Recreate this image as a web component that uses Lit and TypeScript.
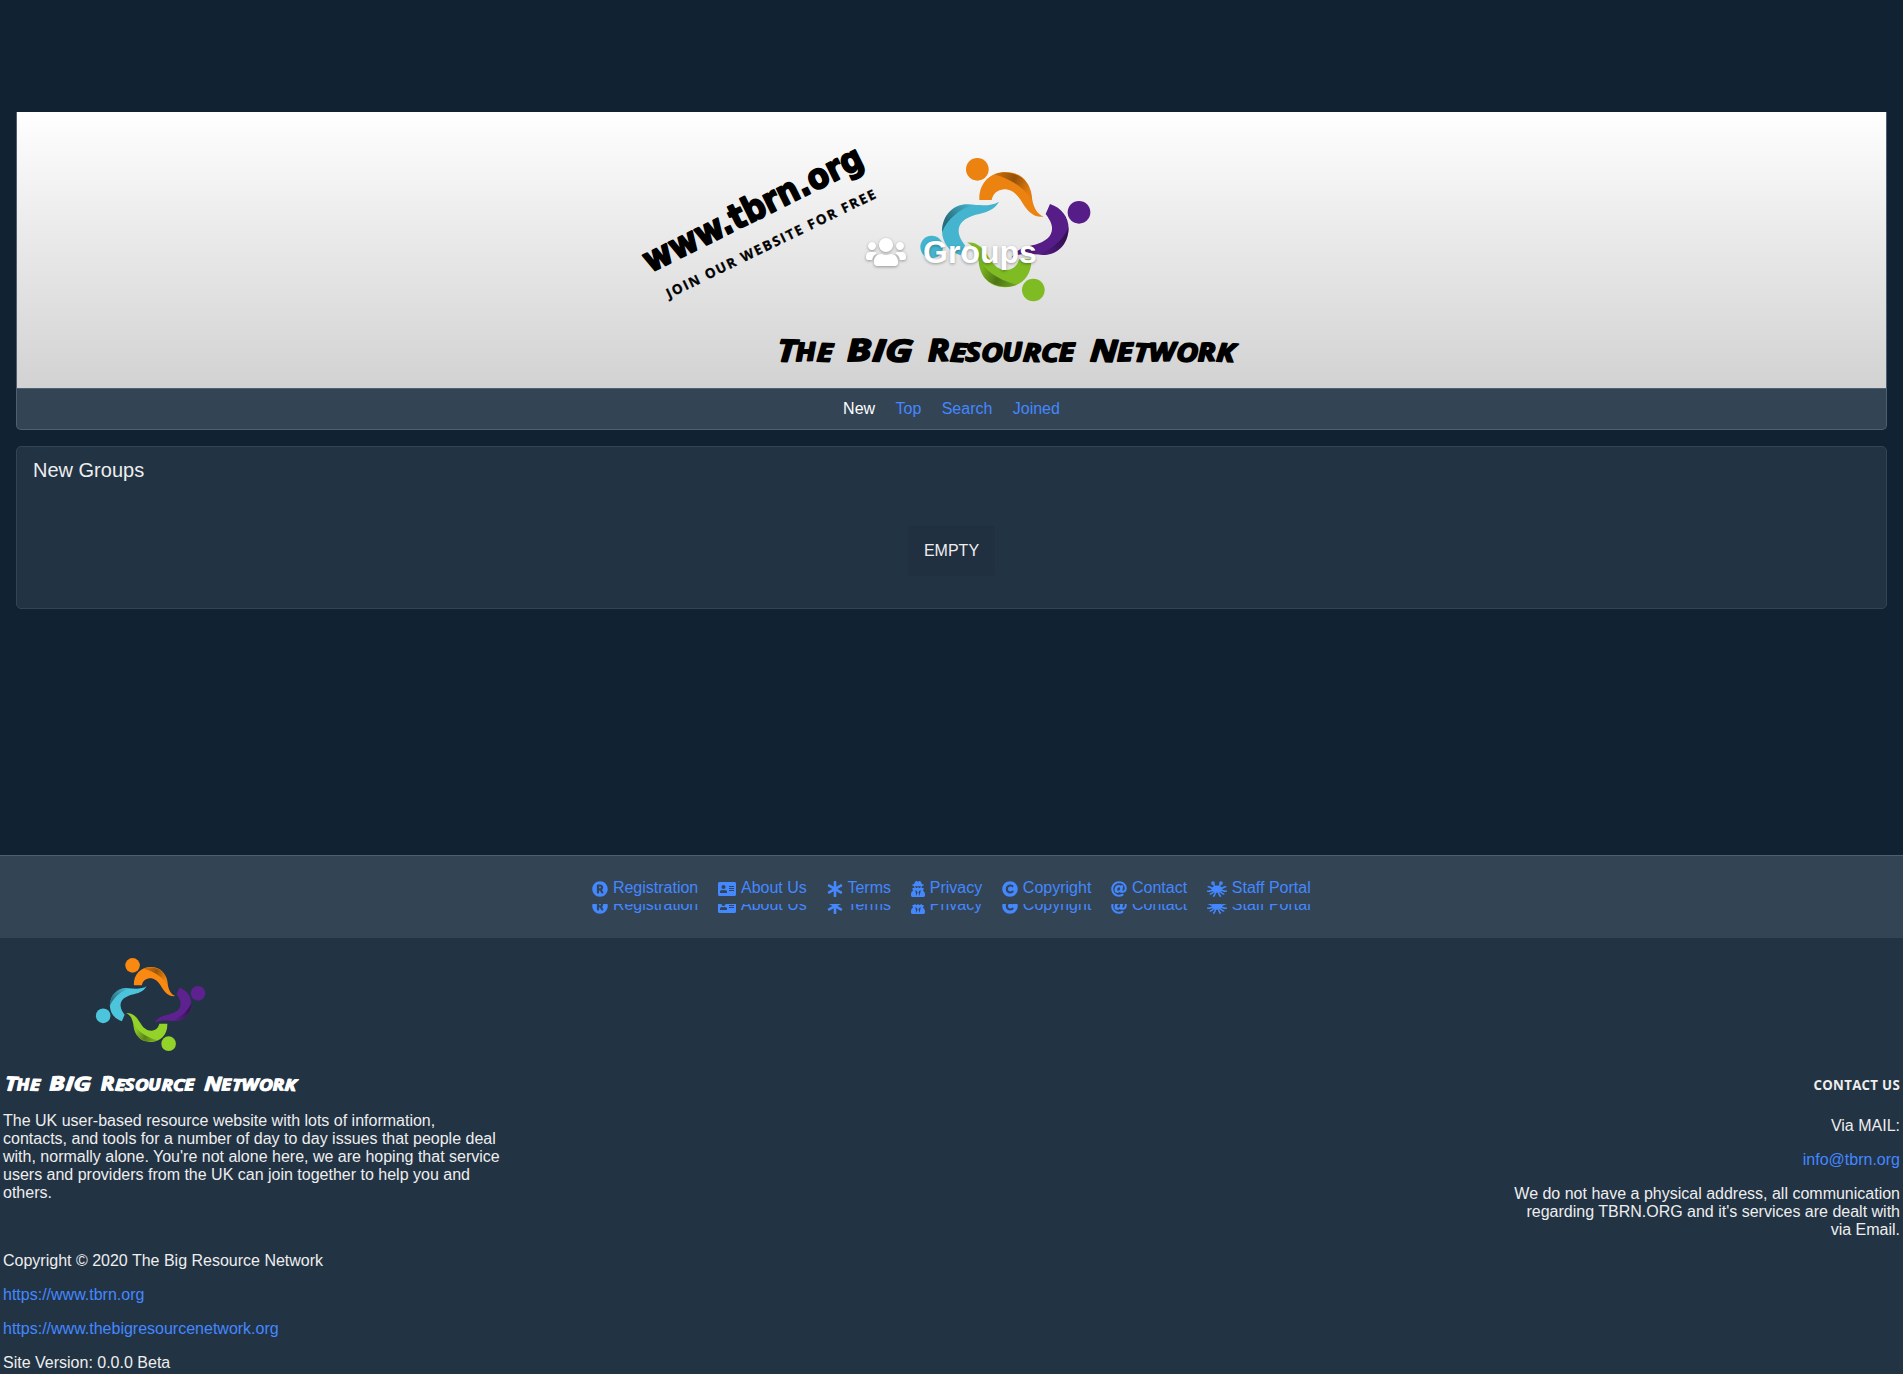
import { LitElement, html, css, svg } from "lit";
import { customElement } from "lit/decorators.js";

const ORANGE_ARM =
  "M418 180C416 130 450 96 497 96C545 96 570 130 575 165C578 200 590 222 611 230C580 234 562 212 547 188C530 160 515 148 492 148C472 150 460 160 455 180Z";
const ORANGE_FOLD = "M460 103C520 85 571 115 575 168L577 184C560 150 520 118 460 103Z";
const PURPLE_ARM =
  "M630 192C665 203 686 232 686 266C684 315 650 346 608 345C570 342 540 338 515 353C528 328 555 320 585 314C615 305 638 290 636 262C634 245 626 235 617 222Z";
const PURPLE_FOLD = "M686 262C685 315 650 346 606 345L594 343C635 330 670 300 686 262Z";

interface Palette { orange: string; purple: string; green: string; cyan: string; text: string }
const LIGHT: Palette = { orange: "#ec820f", purple: "#561c87", green: "#7fbb22", cyan: "#45b5cf", text: "#000" };
const DARK: Palette = { orange: "#f98911", purple: "#5e2290", green: "#92d229", cyan: "#4cc4dc", text: "#fff" };

/* Four figures joined in a ring; the lower pair repeats the upper pair turned half way round. */
const emblem = (p: Palette, transform: string) => svg`
  <g transform=${transform}>
    <defs>
      <linearGradient id="foldA" x1="1" y1="0.3" x2="0" y2="0">
        <stop offset="0" stop-color="#000" stop-opacity="0.05"/><stop offset="0.45" stop-color="#000" stop-opacity="0.38"/><stop offset="1" stop-color="#000" stop-opacity="0.1"/>
      </linearGradient>
      <linearGradient id="foldB" x1="1" y1="0.2" x2="0" y2="1">
        <stop offset="0.2" stop-color="#000" stop-opacity="0.4"/><stop offset="1" stop-color="#000" stop-opacity="0"/>
      </linearGradient>
    </defs>
    <circle cx="412" cy="88" r="34" fill=${p.orange}/>
    <path d=${ORANGE_ARM} fill=${p.orange}/>
    <path d=${ORANGE_FOLD} fill="url(#foldA)"/>
    <circle cx="717" cy="217" r="34" fill=${p.purple}/>
    <path d=${PURPLE_ARM} fill=${p.purple}/>
    <path d=${PURPLE_FOLD} fill="url(#foldB)"/>
    <g transform="rotate(180 496 269)">
      <circle cx="412" cy="88" r="34" fill=${p.green}/>
      <path d=${ORANGE_ARM} fill=${p.green}/>
      <path d=${ORANGE_FOLD} fill="url(#foldA)"/>
      <circle cx="717" cy="217" r="34" fill=${p.cyan}/>
      <path d=${PURPLE_ARM} fill=${p.cyan}/>
      <path d=${PURPLE_FOLD} fill="url(#foldB)"/>
    </g>
  </g>`;

/* Capital, small capitals, left edge, width, tilt of each letter in degrees. */
const WORDS: [string, string, number, number, string][] = [
  ["T", "HE", 36, 166, "2 -3 2"],
  ["BIG", "", 246, 196, "-2 3 2"],
  ["R", "ESOURCE", 489, 440, "-2 3 -2 2 -3 2 3 -1"],
  ["N", "ETWORK", 974, 434, "2 -2 3 -2 2 -2 3"],
];

const wordmark = (p: Palette, transform: string) => svg`
  <g transform=${transform} class="brush" fill=${p.text} stroke=${p.text}>
    ${WORDS.map(
      ([cap, rest, x, w, tilt]) => svg`<text x=${x} y="109" rotate=${tilt} textLength=${w} lengthAdjust="spacingAndGlyphs"
        ><tspan font-size="92">${cap}</tspan><tspan font-size="76">${rest}</tspan></text>`
    )}
  </g>`;

interface FooterLink { label: string; width: number; d: string; octo?: boolean }
const FOOTER_LINKS: FooterLink[] = [
  { label: "Registration", width: 512, d: "M285.363 207.475c0 18.6-9.831 28.431-28.431 28.431h-29.876v-56.14h23.378c28.668 0 34.929 8.773 34.929 27.709zM504 256c0 136.967-111.033 248-248 248S8 392.967 8 256 119.033 8 256 8s248 111.033 248 248zM363.411 360.414c-46.729-84.825-43.299-78.636-44.702-80.98 23.432-15.172 37.945-42.979 37.945-74.486 0-54.244-31.5-89.252-105.498-89.252h-70.667c-13.255 0-24 10.745-24 24V372c0 13.255 10.745 24 24 24h22.567c13.255 0 24-10.745 24-24v-71.663h25.556l44.129 82.937a24.001 24.001 0 0 0 21.188 12.727h24.464c18.261-.001 29.829-19.591 21.018-35.587z" },
  { label: "About Us", width: 576, d: "M528 32H48C21.5 32 0 53.5 0 80v352c0 26.5 21.5 48 48 48h480c26.5 0 48-21.5 48-48V80c0-26.5-21.5-48-48-48zm-352 96c35.3 0 64 28.7 64 64s-28.7 64-64 64-64-28.7-64-64 28.7-64 64-64zm112 236.8c0 10.6-10 19.2-22.4 19.2H86.4C74 384 64 375.4 64 364.8v-19.2c0-31.8 30.1-57.6 67.2-57.6h5c12.3 5.1 25.7 8 39.8 8s27.6-2.9 39.8-8h5c37.1 0 67.2 25.8 67.2 57.6v19.2zM512 312c0 4.4-3.6 8-8 8H360c-4.4 0-8-3.6-8-8v-16c0-4.4 3.6-8 8-8h144c4.4 0 8 3.6 8 8v16zm0-64c0 4.4-3.6 8-8 8H360c-4.4 0-8-3.6-8-8v-16c0-4.4 3.6-8 8-8h144c4.4 0 8 3.6 8 8v16zm0-64c0 4.4-3.6 8-8 8H360c-4.4 0-8-3.6-8-8v-16c0-4.4 3.6-8 8-8h144c4.4 0 8 3.6 8 8v16z" },
  { label: "Terms", width: 512, d: "M478.21 334.093L336 256l142.21-78.093c11.795-6.477 15.961-21.384 9.232-33.037l-19.48-33.741c-6.728-11.653-21.72-15.499-33.227-8.523L296 186.718l3.475-162.204C299.763 11.061 288.937 0 275.48 0h-38.96c-13.456 0-24.283 11.061-23.994 24.514L216 186.718 77.265 102.607c-11.506-6.976-26.499-3.13-33.227 8.523l-19.48 33.741c-6.728 11.653-2.562 26.56 9.233 33.037L176 256 33.79 334.093c-11.795 6.477-15.961 21.384-9.232 33.037l19.48 33.741c6.728 11.653 21.721 15.499 33.227 8.523L216 325.282l-3.475 162.204C212.237 500.939 223.064 512 236.52 512h38.961c13.456 0 24.283-11.061 23.995-24.514L296 325.282l138.735 84.111c11.506 6.976 26.499 3.13 33.227-8.523l19.48-33.741c6.728-11.653 2.563-26.559-9.232-33.036z" },
  { label: "Privacy", width: 448, d: "M383.9 308.3l23.9-62.6c4-10.5-3.7-21.7-15-21.7h-58.5c11-18.9 17.8-40.6 17.8-64v-.3c39.2-7.8 64-19.1 64-31.7 0-13.3-27.3-25.1-70.1-33-9.2-32.8-27-65.8-40.6-82.8-9.5-11.9-25.9-15.6-39.5-8.8l-27.6 13.8c-9 4.5-19.6 4.5-28.6 0L182.1 3.4c-13.6-6.8-30-3.1-39.5 8.8-13.5 17-31.4 50-40.6 82.8-42.7 7.9-70 19.7-70 33 0 12.6 24.8 23.9 64 31.7v.3c0 23.4 6.8 45.1 17.8 64H56.3c-11.5 0-19.2 11.7-14.7 22.3l25.8 60.2C27.3 329.8 0 372.7 0 422.4v44.8C0 491.9 20.1 512 44.8 512h358.4c24.7 0 44.8-20.1 44.8-44.8v-44.8c0-48.4-25.8-90.4-64.1-114.1zM176 480l-41.6-192 49.6 32 24 40-32 120zm96 0l-32-120 24-40 49.6-32L272 480zm41.7-298.5c-3.9 11.9-7 24.6-16.5 33.4-10.1 9.3-48 22.4-64-25-2.8-8.4-15.4-8.4-18.3 0-17 50.2-56 32.4-64 25-9.5-8.8-12.7-21.5-16.5-33.4-.8-2.5-6.3-5.7-6.3-5.8v-10.8c28.3 3.6 61 5.8 96 5.8s67.7-2.1 96-5.8v10.8c-.1.1-5.6 3.2-6.4 5.8z" },
  { label: "Copyright", width: 512, d: "M256 8C119.033 8 8 119.033 8 256s111.033 248 248 248 248-111.033 248-248S392.967 8 256 8zm117.134 346.753c-1.592 1.867-39.776 45.731-109.851 45.731-84.692 0-144.484-63.26-144.484-145.567 0-81.303 62.004-143.401 143.762-143.401 66.957 0 101.965 37.315 103.422 38.904a12 12 0 0 1 1.238 14.623l-22.38 34.655c-4.049 6.267-12.774 7.351-18.234 2.295-.233-.214-26.529-23.88-61.88-23.88-46.116 0-73.916 33.575-73.916 76.082 0 39.602 25.514 79.692 74.277 79.692 38.697 0 65.28-28.338 65.544-28.625 5.132-5.565 14.059-5.033 18.508 1.053l24.547 33.572a12.001 12.001 0 0 1-.553 14.866z" },
  { label: "Contact", width: 512, d: "M256 8C118.941 8 8 118.919 8 256c0 137.059 110.919 248 248 248 48.154 0 95.342-14.14 135.408-40.223 12.005-7.815 14.625-24.288 5.552-35.372l-10.177-12.433c-7.671-9.371-21.179-11.667-31.373-5.129C325.92 429.757 291.314 440 256 440c-101.458 0-184-82.542-184-184S154.542 72 256 72c100.139 0 184 57.619 184 160 0 38.786-21.093 79.742-58.17 83.693-17.349-.454-16.91-12.857-13.476-30.024l23.433-121.11C394.653 149.75 383.308 136 368.225 136h-44.981a13.518 13.518 0 0 0-13.432 11.993l-.01.092c-14.697-17.901-40.448-21.775-59.971-21.775-74.58 0-137.831 62.234-137.831 151.46 0 65.303 36.785 105.87 96 105.87 26.984 0 57.369-15.637 74.991-38.333 9.522 34.104 40.613 34.104 70.671 34.104C462.609 379.41 504 307.798 504 232 504 95.653 394.023 8 256 8zm-21.68 304.43c-22.249 0-36.07-15.623-36.07-40.771 0-44.993 30.779-72.729 58.628-72.729 22.292 0 35.601 15.241 35.601 40.77 0 45.061-33.875 72.73-58.159 72.73z" },
  { label: "Staff Portal", width: 640, octo: true, d: "" },
];

const USERS =
  "M96 224c35.3 0 64-28.7 64-64s-28.7-64-64-64-64 28.7-64 64 28.7 64 64 64zm448 0c35.3 0 64-28.7 64-64s-28.7-64-64-64-64 28.7-64 64 28.7 64 64 64zm32 32h-64c-17.6 0-33.5 7.1-45.1 18.6 40.3 22.1 68.9 62 75.1 109.4h66c17.7 0 32-14.3 32-32v-32c0-35.3-28.7-64-64-64zm-256 0c61.9 0 112-50.1 112-112S381.9 32 320 32 208 82.1 208 144s50.1 112 112 112zm76.8 32h-8.3c-20.8 10-43.9 16-68.5 16s-47.6-6-68.5-16h-8.3C179.6 288 128 339.6 128 403.2V432c0 26.5 21.5 48 48 48h288c26.5 0 48-21.5 48-48v-28.8c0-63.6-51.6-115.2-115.2-115.2zm-223.7-13.4C161.5 263.1 145.6 256 128 256H64c-35.3 0-64 28.7-64 64v32c0 17.7 14.3 32 32 32h65.9c6.3-47.4 34.9-87.3 75.2-109.4z";

const monster = svg`
  <ellipse cx="320" cy="262" rx="168" ry="116"/>
  <g fill="none" stroke="currentColor" stroke-width="50" stroke-linecap="round" stroke-linejoin="round">
    <circle cx="192" cy="66" r="34"/><circle cx="448" cy="66" r="34"/>
    <path d="M214 108L256 190M426 108L384 190"/>
    <path d="M180 235C125 235 100 175 40 182M460 235C515 235 540 175 600 182"/>
    <path d="M190 295C130 295 90 345 26 325M450 295C510 295 550 345 614 325"/>
    <path d="M222 340C175 360 165 420 105 415M418 340C465 360 475 420 535 415"/>
    <path d="M275 350C265 400 255 440 215 484M365 350C375 400 385 440 425 484"/>
  </g>`;

@customElement("app-root")
export class AppRoot extends LitElement {
  static styles = css`
    :host {
      display: block;
      font: 16px/18px "Liberation Sans", Arial, sans-serif;
      color: #eee;
      background: #112233;
    }
    * { box-sizing: border-box; }
    a { color: #4488ff; text-decoration: none; }
    .page { height: 1374px; overflow: hidden; display: flex; flex-direction: column; }
    .main { padding: 112px 16px 0; height: 855px; flex: none; }
    .head {
      border: 1px solid #4d5f70; border-top: 0; border-radius: 0 0 5px 5px;
      overflow: hidden; background: #334455;
    }
    .cover {
      display: grid; height: 276px;
      background: linear-gradient(#fff, #ececec 40%, #d2d2d2);
    }
    .cover > * { grid-area: 1 / 1; }
    .art { width: 1869px; height: 276px; display: block; }
    .title {
      display: flex; align-items: center; justify-content: center;
      margin: 0; padding-top: 4px; z-index: 1;
      font-size: 32px; line-height: 36px; color: #fff;
      text-shadow: 0 1px 3px rgba(0, 0, 0, 0.35);
    }
    .title svg {
      width: 40px; height: 32px; margin-right: 17px; fill: #fff; overflow: visible;
      filter: drop-shadow(0 1px 1.5px rgba(0, 0, 0, 0.35));
    }
    .tabs {
      display: flex; justify-content: center; gap: 20.4px;
      height: 41px; padding-top: 11px; border-top: 1px solid #4d5f70;
    }
    .tabs .active { color: #fff; }
    .panel {
      margin-top: 16px; height: 163px; padding: 12px 16px;
      border: 1px solid #334455; border-radius: 5px; background: #223344;
      display: flex; flex-direction: column;
    }
    .panel h2 { margin: 0; font-size: 20px; line-height: 23px; font-weight: 400; }
    .empty {
      align-self: center; margin-top: 44px; padding: 16px; height: 50px;
      border-radius: 4px; background: #213041;
    }
    .links {
      flex: none; height: 83px; padding-top: 23px;
      border-top: 1px solid #4d5f70; background: #334455;
    }
    .row { display: flex; justify-content: center; align-items: flex-end; gap: 20.1px; height: 18px; }
    .row.cut { height: 10px; margin-top: 7px; overflow: hidden; }
    .row a { display: flex; align-items: flex-end; height: 18px; gap: 4.6px; flex: none; }
    .row span { height: 18px; line-height: 17px; }
    .row svg { height: 16px; fill: currentColor; display: block; }
    .bottom { flex: 1; display: flex; justify-content: space-between; background: #223344; padding: 0 3px; }
    .bottom p { margin: 0 0 16px; }
    .brand { display: block; width: 310px; height: 174px; }
    .bottom .spacer { height: 18px; }
    .contact { text-align: right; padding-top: 138px; }
    .contact h5 {
      margin: 0 0 23px; font: 700 13.28px/18px "Open Sans", "Noto Sans", sans-serif; letter-spacing: 0.3px;
    }
    .brush {
      font-family: "Open Sans", "Noto Sans", sans-serif; font-weight: 700; font-style: italic;
      stroke-width: 5; stroke-linejoin: round;
    }
    .site {
      font: 700 35px "DejaVu Sans", Verdana, sans-serif; stroke: #000; stroke-width: 1.8; stroke-linejoin: round;
    }
    .join { font: 700 13.5px "Open Sans", "Noto Sans", sans-serif; stroke: #000; stroke-width: 0.3; }
  `;

  private linkRow(cut: boolean) {
    return html`<div class=${cut ? "row cut" : "row"}>
      ${FOOTER_LINKS.map(
        (l) => html`<a href="#"
          ><svg viewBox="0 0 ${l.width} 512" width=${l.width / 32}>${l.octo ? monster : svg`<path d=${l.d}/>`}</svg
          ><span>${l.label}</span></a
        >`
      )}
    </div>`;
  }

  render() {
    return html`<div class="page">
      <main class="main">
        <header class="head">
          <div class="cover">
            <svg class="art" viewBox="17 112 1869 276">
              <text class="site" transform="translate(650 273) rotate(-26.4)" textLength="241" lengthAdjust="spacingAndGlyphs">www.tbrn.org</text>
              <text class="join" transform="translate(669 298.5) rotate(-25.9)" textLength="231">JOIN OUR WEBSITE FOR FREE</text>
              ${emblem(LIGHT, "translate(840 140) scale(0.33333)")}
              ${wordmark(LIGHT, "translate(765 325) scale(0.33333)")}
            </svg>
            <h1 class="title"><svg viewBox="0 0 640 512"><path d=${USERS} /></svg>Groups</h1>
          </div>
          <nav class="tabs">
            <a class="active" href="#">New</a><a href="#">Top</a><a href="#">Search</a><a href="#">Joined</a>
          </nav>
        </header>
        <section class="panel">
          <h2>New Groups</h2>
          <div class="empty">EMPTY</div>
        </section>
      </main>
      <nav class="links">${this.linkRow(false)}${this.linkRow(true)}</nav>
      <footer class="bottom">
        <div>
          <svg class="brand" viewBox="3 938 310 174">
            ${emblem(DARK, "translate(44.2 946.3) scale(0.2145 0.2165)")}
            ${wordmark(DARK, "translate(-3 1067.3) scale(0.2124)")}
          </svg>
          <p>
            The UK user-based resource website with lots of information,<br />contacts, and tools for a number of day to
            day issues that people deal<br />with, normally alone. You're not alone here, we are hoping that
            service<br />users and providers from the UK can join together to help you and<br />others.
          </p>
          <p class="spacer"></p>
          <p>Copyright © 2020 The Big Resource Network</p>
          <p><a href="#">https://www.tbrn.org</a></p>
          <p><a href="#">https://www.thebigresourcenetwork.org</a></p>
          <p>Site Version: 0.0.0 Beta</p>
        </div>
        <div class="contact">
          <h5>CONTACT US</h5>
          <p>Via MAIL:</p>
          <p><a href="#">info@tbrn.org</a></p>
          <p>
            We do not have a physical address, all communication<br />regarding TBRN.ORG and it's services are dealt
            with<br />via Email.
          </p>
        </div>
      </footer>
    </div>`;
  }
}
